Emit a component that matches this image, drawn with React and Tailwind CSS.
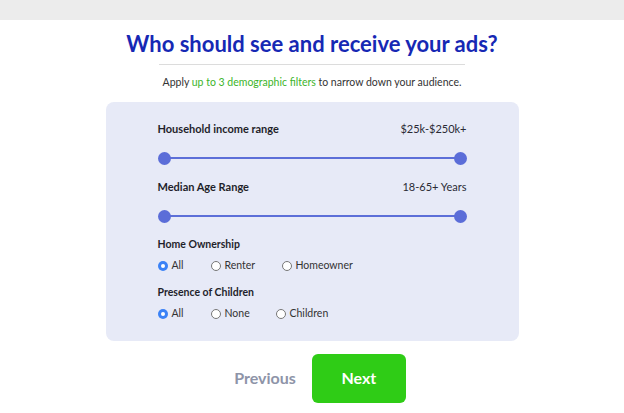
import { useState } from "react";

function RangeRow({ label, value }) {
  return (
    <div>
      <div className="flex justify-between items-center h-[16px]">
        <span className="text-[11px] font-bold text-[#1f1f2b]">{label}</span>
        <span className="text-[11px] text-[#2a2a35]">{value}</span>
      </div>
      <div className="relative h-[13px] mt-[15px] flex items-center">
        <div className="h-[2px] w-full bg-[#5d6fd8] mx-[6px]" />
        <div className="absolute left-0 top-0 w-[13px] h-[13px] rounded-full bg-[#5b6dd8]" />
        <div className="absolute right-0 top-0 w-[13px] h-[13px] rounded-full bg-[#5b6dd8]" />
      </div>
    </div>
  );
}

function Radio({ label, checked, width }) {
  return (
    <label className={`flex items-center gap-[4px] ${width}`}>
      <span
        className={
          checked
            ? "w-[10px] h-[10px] rounded-full bg-[#3b82f6] flex items-center justify-center"
            : "w-[10px] h-[10px] rounded-full border border-[#777] bg-white"
        }
      >
        {checked && <span className="w-[4px] h-[4px] rounded-full bg-white" />}
      </span>
      <span className="text-[10.5px] text-[#333]">{label}</span>
    </label>
  );
}

function RadioGroup({ label, options, widths }) {
  const [sel] = useState(0);
  return (
    <div>
      <div className="text-[10.5px] font-bold text-[#1f1f2b] h-[16px] flex items-center">{label}</div>
      <div className="flex mt-[7px] h-[12px] items-center">
        {options.map((o, i) => (
          <Radio key={o} label={o} checked={i === sel} width={widths[i]} />
        ))}
      </div>
    </div>
  );
}

export default function App() {
  return (
    <div className="w-[624px] h-[413px] bg-white overflow-hidden" style={{ fontFamily: "Lato, 'Noto Sans', sans-serif" }}>
      <div className="h-[20px] bg-[#ececec]" />

      <h1 className="text-center text-[22px] font-bold text-[#1628b4] mt-[10px] leading-[28px]">
        Who should see and receive your ads?
      </h1>
      <div className="mx-auto mt-[6px] w-[306px] h-px bg-[#dcdcdc]" />
      <p className="text-center text-[10.5px] text-[#333] mt-[10px]">
        Apply <span className="text-[#3cb52a]">up to 3 demographic filters</span> to narrow down your audience.
      </p>

      <div className="mx-auto mt-[11px] w-[413px] h-[239px] rounded-[8px] bg-[#e7eaf7] px-[52px] pt-[19px]">
        <div className="flex flex-col gap-[14px]">
          <RangeRow label="Household income range" value="$25k-$250k+" />
          <RangeRow label="Median Age Range" value="18-65+ Years" />
        </div>
        <div className="mt-[14px] flex flex-col gap-[13px]">
          <RadioGroup label="Home Ownership" options={["All", "Renter", "Homeowner"]} widths={["w-[53px]", "w-[71px]", ""]} />
          <RadioGroup label="Presence of Children" options={["All", "None", "Children"]} widths={["w-[53px]", "w-[65px]", ""]} />
        </div>
      </div>

      <div className="flex justify-center items-center mt-[13px] gap-[16px] pl-[16px]">
        <button className="text-[16px] font-bold text-[#8e94a8]">Previous</button>
        <button className="w-[94px] h-[49px] rounded-[6px] bg-[#2fcc16] text-white text-[16px] font-bold">Next</button>
      </div>
    </div>
  );
}
